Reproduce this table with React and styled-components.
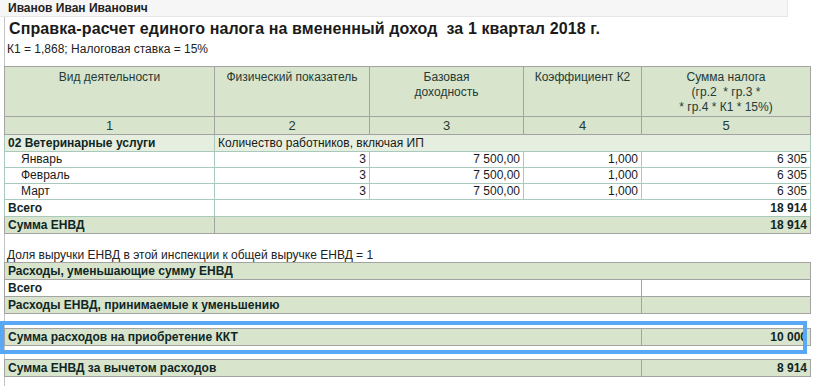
import React from "react";
import styled, { createGlobalStyle } from "styled-components";

const Global = createGlobalStyle`
  body {
    margin: 0;
    background: #fff;
    font-family: "Liberation Sans", Arial, sans-serif;
    color: #1a1a1a;
  }
`;

const Page = styled.div`
  width: 818px;
  height: 386px;
  overflow: hidden;
`;

const NameBar = styled.div`
  width: 788px;
  height: 17px;
  box-sizing: border-box;
  background: #f6f6f6;
  border-right: 1px solid #e6e6e6;
  border-bottom: 1px solid #e6e6e6;
  padding-left: 8px;
  font-size: 12px;
  font-weight: bold;
  line-height: 17px;
  color: #222;
`;

const Body = styled.div`
  margin-left: 4px;
  border-left: 1px solid #c4c4c4;
  height: 369px;
`;

const Title = styled.div`
  font-size: 16px;
  font-weight: bold;
  line-height: 19px;
  letter-spacing: 0.1px;
  padding: 2px 0 0 4px;
  color: #1a1a1a;
`;

const Note = styled.div`
  font-size: 12px;
  line-height: 14px;
  padding-left: 2px;
  margin-top: ${({ $top }) => $top || 0}px;
  color: #222;
`;

const Table = styled.table`
  border-collapse: collapse;
  table-layout: fixed;
  width: 806px;
  margin-left: -1px;
  margin-top: ${({ $top }) => $top || 0}px;
  font-size: 12px;
`;

const HeadCell = styled.td`
  background: #d8e4cc;
  border: 1px solid #a3a3a3;
  color: #243a36;
  text-align: center;
  vertical-align: top;
  line-height: 15px;
  padding: ${({ $num }) => ($num ? "1px 0 0" : "3px 2px 0")};
  height: ${({ $num }) => ($num ? 16 : 46)}px;
  font-size: ${({ $num }) => ($num ? 13 : 12)}px;
`;

const Cell = styled.td`
  height: ${({ $h }) => $h || 15}px;
  padding: 0 3px 0 ${({ $indent }) => ($indent ? 16 : 3)}px;
  line-height: 15px;
  white-space: nowrap;
  overflow: hidden;
  font-weight: ${({ $bold }) => ($bold ? "bold" : "normal")};
  text-align: ${({ $right }) => ($right ? "right" : "left")};
  color: ${({ $bold }) => ($bold ? "#0f2626" : "#1a1a1a")};
  background: ${({ $tone }) =>
    $tone === "green" ? "#d8e4cc" : $tone === "light" ? "#e6efdf" : "#fff"};
  border: 1px solid
    ${({ $tone, $gray }) => ($tone === "green" || $gray ? "#a3a3a3" : "#aac9bd")};
`;

const Highlight = styled.div`
  position: relative;
  margin-top: 14px;

  &::after {
    content: "";
    position: absolute;
    left: -5px;
    top: -7px;
    width: 799px;
    height: 25px;
    border: 4px solid #58a8f6;
    pointer-events: none;
  }
`;

const months = ["Январь", "Февраль", "Март"];

function TwoCols() {
  return (
    <colgroup>
      <col style={{ width: 637 }} />
      <col style={{ width: 169 }} />
    </colgroup>
  );
}

export default function App() {
  return (
    <Page>
      <Global />
      <NameBar>Иванов Иван Иванович</NameBar>
      <Body>
        <Title>Справка-расчет единого налога на вмененный доход&nbsp; за 1 квартал 2018 г.</Title>
        <Note $top={4}>К1 = 1,868; Налоговая ставка = 15%</Note>

        <Table $top={10}>
          <colgroup>
            <col style={{ width: 210 }} />
            <col style={{ width: 155 }} />
            <col style={{ width: 154 }} />
            <col style={{ width: 118 }} />
            <col style={{ width: 169 }} />
          </colgroup>
          <tbody>
            <tr>
              <HeadCell>Вид деятельности</HeadCell>
              <HeadCell>Физический показатель</HeadCell>
              <HeadCell>
                Базовая
                <br />
                доходность
              </HeadCell>
              <HeadCell>Коэффициент К2</HeadCell>
              <HeadCell>
                Сумма налога
                <br />
                (гр.2&nbsp; * гр.3 *
                <br />
                * гр.4 * К1 * 15%)
              </HeadCell>
            </tr>
            <tr>
              {[1, 2, 3, 4, 5].map((n) => (
                <HeadCell key={n} $num>
                  {n}
                </HeadCell>
              ))}
            </tr>
            <tr>
              <Cell $tone="light" $bold $h={16}>
                02 Ветеринарные услуги
              </Cell>
              <Cell $tone="light" colSpan={4} $h={16}>
                Количество работников, включая ИП
              </Cell>
            </tr>
            {months.map((m) => (
              <tr key={m}>
                <Cell $indent>{m}</Cell>
                <Cell $right>3</Cell>
                <Cell $right>7 500,00</Cell>
                <Cell $right>1,000</Cell>
                <Cell $right>6 305</Cell>
              </tr>
            ))}
            <tr>
              <Cell $bold $h={16}>Всего</Cell>
              <Cell $bold $right colSpan={4} $h={16}>
                18 914
              </Cell>
            </tr>
            <tr>
              <Cell $tone="green" $bold $h={16}>
                Сумма ЕНВД
              </Cell>
              <Cell $tone="green" $bold $right colSpan={4} $h={16}>
                18 914
              </Cell>
            </tr>
          </tbody>
        </Table>

        <Note $top={14}>Доля выручки ЕНВД в этой инспекции к общей выручке ЕНВД = 1</Note>

        <Table>
          <TwoCols />
          <tbody>
            <tr>
              <Cell $tone="green" $bold colSpan={2} $h={16}>
                Расходы, уменьшающие сумму ЕНВД
              </Cell>
            </tr>
            <tr>
              <Cell $gray $bold $h={16}>
                Всего
              </Cell>
              <Cell $gray $h={16} />
            </tr>
            <tr>
              <Cell $tone="green" $bold $h={16}>
                Расходы ЕНВД, принимаемые к уменьшению
              </Cell>
              <Cell $tone="green" $h={16} />
            </tr>
          </tbody>
        </Table>

        <Highlight>
          <Table>
            <TwoCols />
            <tbody>
              <tr>
                <Cell $tone="green" $bold $h={16}>
                  Сумма расходов на приобретение ККТ
                </Cell>
                <Cell $tone="green" $bold $right $h={16}>
                  10 000
                </Cell>
              </tr>
            </tbody>
          </Table>
        </Highlight>

        <Table $top={13}>
          <TwoCols />
          <tbody>
            <tr>
              <Cell $tone="green" $bold $h={16}>
                Сумма ЕНВД за вычетом расходов
              </Cell>
              <Cell $tone="green" $bold $right $h={16}>
                8 914
              </Cell>
            </tr>
          </tbody>
        </Table>
      </Body>
    </Page>
  );
}
